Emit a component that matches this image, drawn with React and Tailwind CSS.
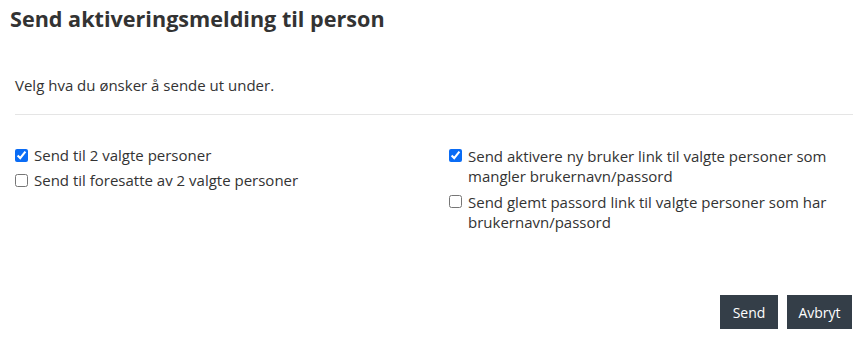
import React, { useState } from "react";

const Check = ({ checked, onChange, children }) => (
  <label className="flex items-start gap-[6px] cursor-pointer">
    <input
      type="checkbox"
      checked={checked}
      onChange={onChange}
      className="mt-[3px] w-[13px] h-[13px] shrink-0 accent-[#0a6cf5]"
    />
    <span>{children}</span>
  </label>
);

const App = () => {
  const [opts, setOpts] = useState({ a: true, b: false, c: true, d: false });
  const toggle = (k) => setOpts({ ...opts, [k]: !opts[k] });

  return (
    <div
      className="w-[868px] h-[343px] bg-white text-[#333] flex flex-col"
      style={{ fontFamily: "'Open Sans', sans-serif" }}
    >
      <h1 className="text-[21.6px] font-bold text-[#333] px-[10px] pt-[6px] leading-[26px]">
        Send aktiveringsmelding til person
      </h1>

      <p className="text-[15px] px-[15px] mt-[43px] leading-[20px]">
        Velg hva du ønsker å sende ut under.
      </p>

      <div className="mx-[15px] mt-[19px] border-t border-[#e5e5e5]" />

      <div className="grid grid-cols-2 px-[15px] mt-[31px] text-[15px] leading-[19px]">
        <div className="flex flex-col gap-[6px] pr-[15px]">
          <Check checked={opts.a} onChange={() => toggle("a")}>
            Send til 2 valgte personer
          </Check>
          <Check checked={opts.b} onChange={() => toggle("b")}>
            Send til foresatte av 2 valgte personer
          </Check>
        </div>
        <div className="flex flex-col gap-[6px] pl-[15px] pr-[15px] leading-[20px]">
          <Check checked={opts.c} onChange={() => toggle("c")}>
            Send aktivere ny bruker link til valgte personer som mangler
            brukernavn/passord
          </Check>
          <Check checked={opts.d} onChange={() => toggle("d")}>
            Send glemt passord link til valgte personer som har
            brukernavn/passord
          </Check>
        </div>
      </div>

      <div className="mt-auto mb-[14px] flex justify-end gap-[9px] px-[16px]">
        <button className="bg-[#343e48] text-white text-[14px] w-[58px] h-[34px]">
          Send
        </button>
        <button className="bg-[#343e48] text-white text-[14px] w-[65px] h-[34px]">
          Avbryt
        </button>
      </div>
    </div>
  );
};

export default App;
